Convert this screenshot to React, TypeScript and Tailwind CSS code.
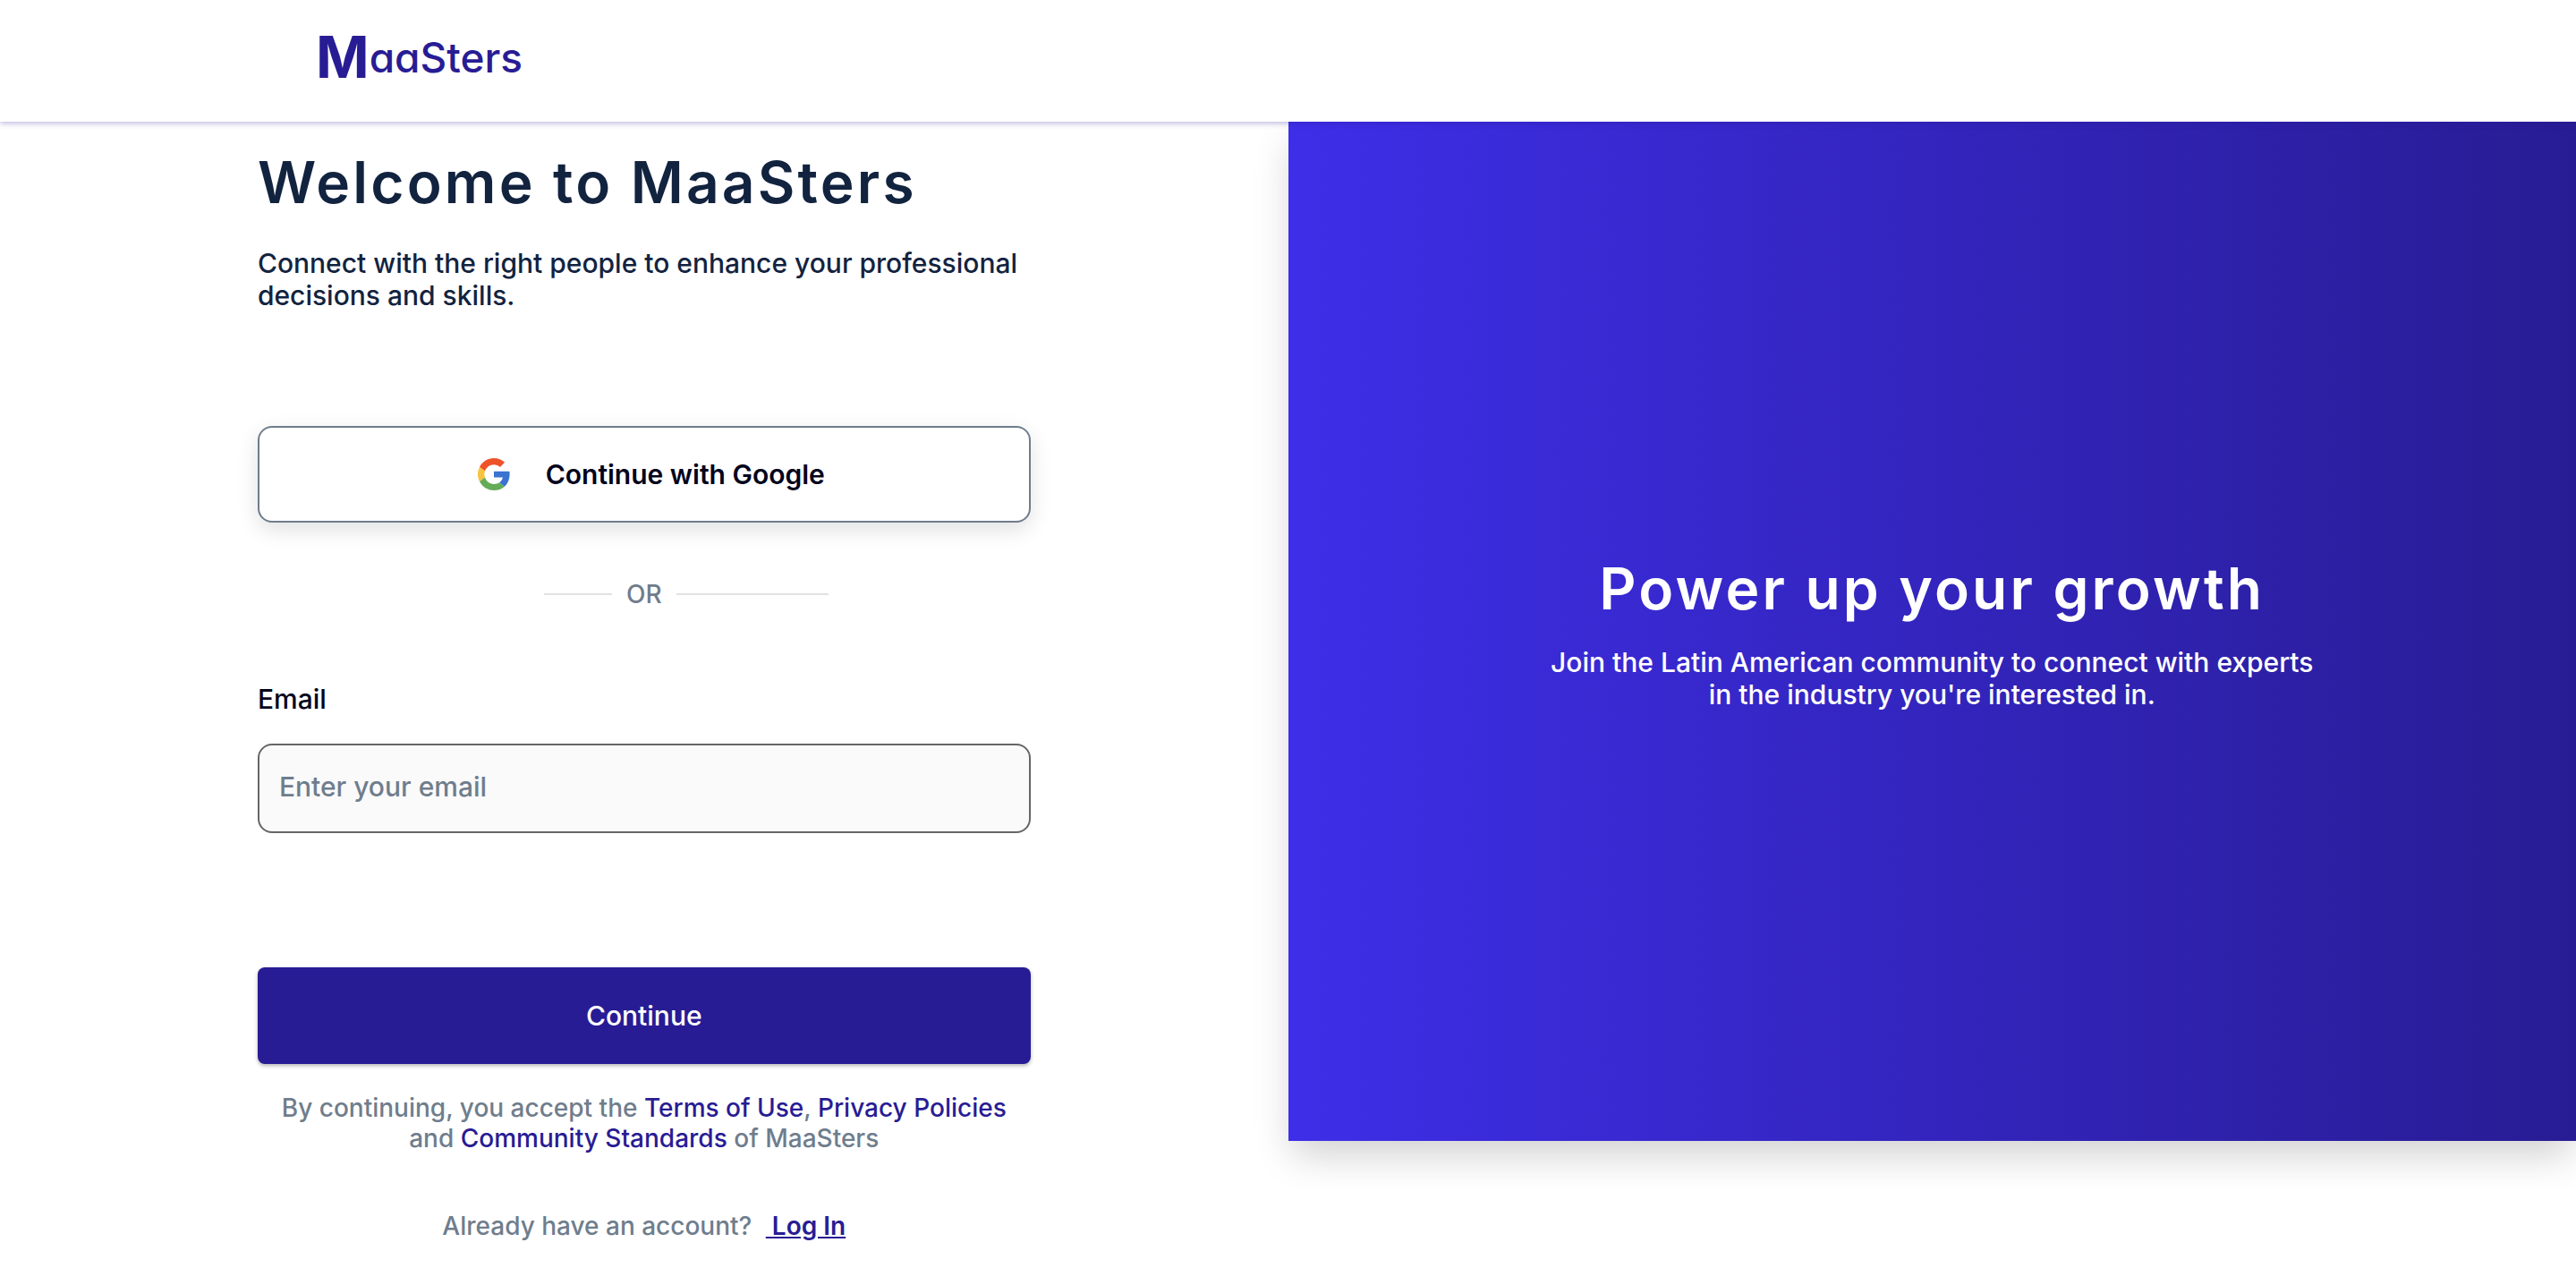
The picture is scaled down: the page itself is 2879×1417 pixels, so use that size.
import React from "react";

function Logo() {
  return (
    <a href="#" aria-label="MaaSters" className="inline-flex items-start text-[#281c94]">
      <span className="text-[64px] leading-none font-bold">M</span>
      <span className="mt-[9px] text-[46px] leading-none font-medium [font-feature-settings:'cv11']">aaSters</span>
    </a>
  );
}

function GoogleIcon() {
  return (
    <svg viewBox="0 0 48 48" className="size-9" aria-hidden="true">
      <path fill="#ee5228" d="M24 9.600c3.600 0 6.700 1.200 9.200 3.600l6.900-6.800C35.900 2.400 30.400 0 24 0 14.600 0 6.500 5.400 2.600 13.200l8 6.200C12.500 13.700 17.700 9.600 24 9.600z" />
      <path fill="#f8c33f" d="M10.600 28.600A14.500 14.500 0 0 1 10.600 19.400l-8-6.200a24 24 0 0 0 0 21.600z" />
      <path fill="#65ac58" d="M24 48c6.500 0 11.900-2.100 15.900-5.800l-7.700-6c-2.200 1.500-4.900 2.300-8.200 2.300-6.300 0-11.500-4.200-13.400-9.900l-8 6.200C6.500 42.600 14.600 48 24 48z" />
      <path fill="#3b74d0" d="M47.500 19.500H24v9.200h13.200c-.6 3.100-2.400 5.700-5 7.500l7.700 6c4.800-4.400 7.600-10.800 7.600-18.200 0-1.600 0-3-.2-4.500z" />
    </svg>
  );
}

function SignUp() {
  return (
    <section className="flex w-1/2 flex-col items-center pt-7">
      <form className="flex w-3/5 flex-col" onSubmit={(e) => e.preventDefault()}>
        <h1 className="text-[64px] leading-[80px] font-semibold tracking-wider text-[#12233f]">Welcome to MaaSters</h1>
        <p className="mt-8 text-[30px] leading-9 font-medium text-[#12233f]">
          Connect with the right people to enhance your professional decisions and skills.
        </p>
        <button
          type="button"
          className="mt-32 flex h-[108px] items-center justify-center gap-10 rounded-2xl border-2 border-[#6f7d8c] bg-white pl-4 text-[30px] font-semibold text-[#03031c] shadow-[0_8px_24px_rgba(0,0,0,0.12)]"
        >
          <GoogleIcon />
          Continue with Google
        </button>
        <div className="mt-[62px] grid grid-cols-[1fr_auto_1fr] items-center gap-4 text-[28px] leading-9 font-medium text-[#6f7d8c]">
          <span className="h-0.5 w-[76px] justify-self-end bg-[#e2e2e2]" />
          OR
          <span className="h-0.5 w-[170px] bg-[#e2e2e2]" />
        </div>
        <label htmlFor="email" className="mt-[81px] text-[30px] leading-9 font-medium text-[#03031c]">
          Email
        </label>
        <input
          id="email"
          type="email"
          placeholder="Enter your email"
          className="mt-8 h-[100px] rounded-2xl border-2 border-[#666] bg-[#fafafa] px-[22px] pb-1 text-[30px] font-medium text-[#03031c] placeholder:text-[#6f7d8c]"
        />
        <button
          type="submit"
          className="mt-[150px] h-[108px] rounded-lg bg-[#281c94] text-[30px] font-medium text-white shadow-[0_2px_4px_rgba(0,0,0,0.3)]"
        >
          Continue
        </button>
        <p className="mt-8 text-center text-[28px] leading-[34px] font-medium text-[#6f7d8c]">
          By continuing, you accept the <a href="#terms" className="text-[#281c94]">Terms of Use</a>,{" "}
          <a href="#privacy" className="text-[#281c94]">Privacy Policies</a> and{" "}
          <a href="#community" className="text-[#281c94]">Community Standards</a> of MaaSters
        </p>
        <p className="mt-16 text-center text-[28px] leading-[34px] font-medium text-[#6f7d8c]">
          Already have an account?{" "}
          <a href="#login" className="ml-2 font-semibold whitespace-pre text-[#281c94] underline"> Log In</a>
        </p>
      </form>
    </section>
  );
}

function Promo() {
  return (
    <aside className="flex h-[1139px] w-1/2 flex-col items-center justify-center bg-linear-to-r from-[#3e2ee8] to-[#281c94] text-center text-white shadow-[0_20px_40px_-4px_rgba(0,0,0,0.18)]">
      <h2 className="text-[64px] leading-[80px] font-semibold tracking-wider">Power up your growth</h2>
      <p className="mt-6 w-3/5 text-[30px] leading-9 font-medium">
        Join the Latin American community to connect with experts in the industry you're interested in.
      </p>
    </aside>
  );
}

export default function App() {
  return (
    <div className="min-h-screen bg-white font-['Inter',sans-serif]">
      <header className="relative flex h-[136px] items-center bg-white pb-2 pl-[353px] shadow-[0_2px_6px_rgba(40,28,148,0.3)]">
        <Logo />
      </header>
      <main className="flex items-start">
        <SignUp />
        <Promo />
      </main>
    </div>
  );
}
